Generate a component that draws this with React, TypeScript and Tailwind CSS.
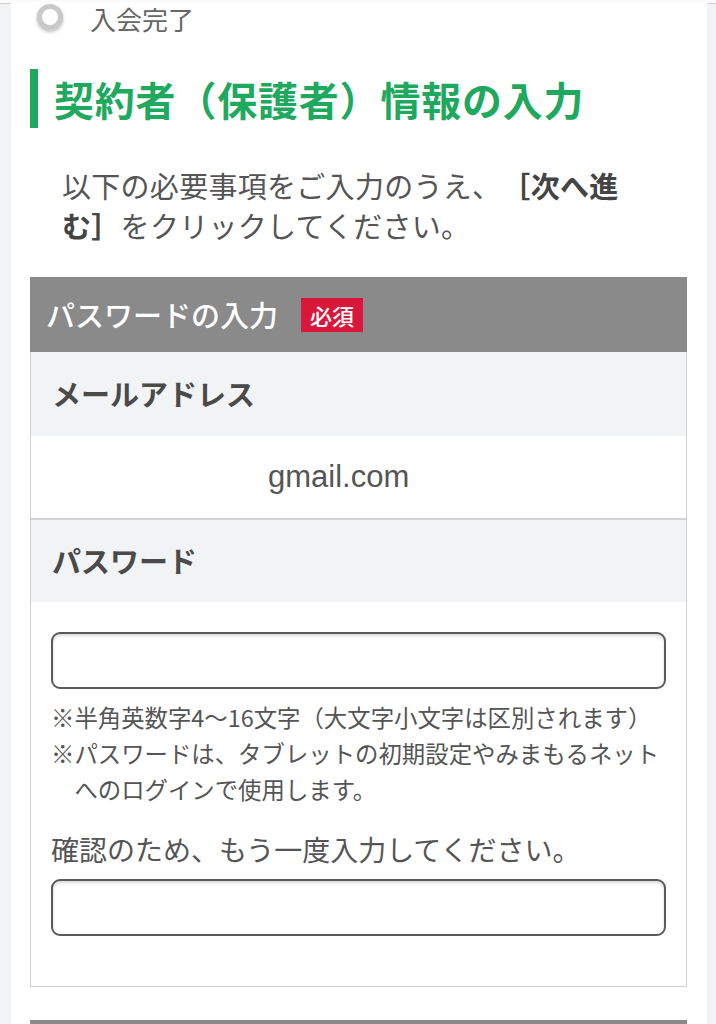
import React from 'react';

const jp = { fontFamily: '"Noto Sans CJK JP", "Noto Sans", sans-serif' };

function StepDot() {
  return (
    <svg width="30" height="34" viewBox="0 0 30 34" className="shrink-0">
      <defs>
        <filter id="dotBlur" x="-30%" y="-30%" width="160%" height="160%">
          <feGaussianBlur stdDeviation="1.6" />
        </filter>
      </defs>
      <circle cx="15" cy="17" r="11" fill="none" stroke="#9a9a9a" strokeWidth="5" filter="url(#dotBlur)" opacity="0.5" />
      <circle cx="15" cy="15" r="10.5" fill="#fff" stroke="#c9c9c9" strokeWidth="5" />
    </svg>
  );
}

function TextInput() {
  return (
    <input
      type="password"
      className="block w-full h-[57px] rounded-[9px] border-2 border-[#5a5a5a] bg-white shadow-[inset_0_2px_3px_rgba(0,0,0,0.15)] outline-none"
    />
  );
}

function Note({ children }: { children: React.ReactNode }) {
  return (
    <div className="flex">
      <span className="w-[1em] shrink-0">※</span>
      <span className="flex-1">{children}</span>
    </div>
  );
}

export default function App() {
  return (
    <div className="min-h-[1024px] bg-[#f2f3f5] overflow-hidden [text-spacing-trim:space-all]" style={jp}>
      <div className="h-[3px] bg-[#fafafa]" />
      <div className="border-t border-[#d2d2d2]">
        <div className="ml-[11px] w-[696px] bg-white min-h-[1024px]">
          {/* step indicator */}
          <div className="flex items-center h-[34px] pl-[24px] -mt-[2px] gap-[25px]">
            <StepDot />
            <span className="text-[26px] leading-none text-[#666]">入会完了</span>
          </div>

          {/* title */}
          <div className="mt-[33px] ml-[19px] flex items-center h-[59px] border-l-[8px] border-[#1fa95e] pl-[16px]">
            <h1 className="text-[40px] font-bold leading-none text-[#1fa95e] tracking-[0.02em]">
              契約者（保護者）情報の入力
            </h1>
          </div>

          {/* lead text */}
          <p className="mt-[37px] ml-[51px] w-[570px] text-[29px] leading-[40px] text-[#555] tracking-[0.01em]">
            以下の必要事項をご入力のうえ、<span className="font-bold text-[#444]">［次へ進む］</span>をクリックしてください。
          </p>

          {/* password box */}
          <div className="mt-[32px] ml-[19px] w-[657px]">
            <div className="h-[75px] bg-[#8a8a8a] flex items-center pl-[16px] gap-[23px]">
              <span className="text-[29px] font-medium text-white leading-none">パスワードの入力</span>
              <span className="bg-[#d8173a] text-white text-[22px] font-medium leading-none px-[9px] py-[6px]">必須</span>
            </div>
            <div className="border-x border-b border-[#d0d0d0]">
              <div className="h-[84px] bg-[#f2f3f5] flex items-center pl-[21px]">
                <span className="text-[29px] font-bold text-[#4a4a4a]">メールアドレス</span>
              </div>
              <div className="h-[84px] bg-white flex items-center pl-[237px] border-b-2 border-[#d4d4d4]">
                <span className="text-[31px] text-[#555]" style={{ fontFamily: '"Liberation Sans", Arial, sans-serif' }}>
                  gmail.com
                </span>
              </div>
              <div className="h-[82px] bg-[#f2f3f5] flex items-center pl-[21px]">
                <span className="text-[29px] font-bold text-[#4a4a4a]">パスワード</span>
              </div>
              <div className="px-[20px] pt-[30px] pb-[50px] bg-white">
                <TextInput />
                <div className="mt-[10px] text-[23.4px] leading-[36px] text-[#555]">
                  <Note>半角英数字4～16文字（大文字小文字は区別されます）</Note>
                  <Note>パスワードは、タブレットの初期設定やみまもるネットへのログインで使用します。</Note>
                </div>
                <p className="mt-[22px] text-[28px] leading-[40px] text-[#555]">確認のため、もう一度入力してください。</p>
                <div className="mt-[10px]">
                  <TextInput />
                </div>
              </div>
            </div>
          </div>

          {/* next section header */}
          <div className="mt-[33px] ml-[19px] w-[657px] h-[75px] bg-[#8a8a8a]" />
        </div>
      </div>
    </div>
  );
}
